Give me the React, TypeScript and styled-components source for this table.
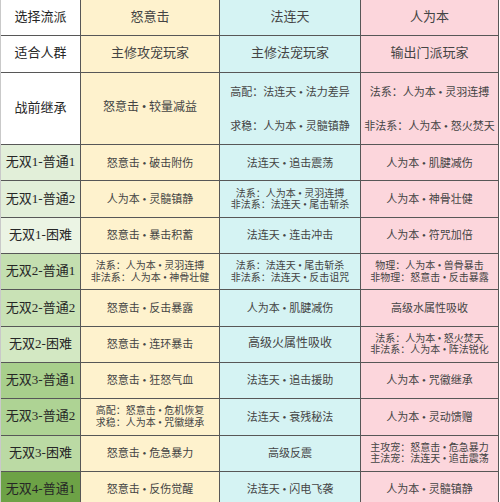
import React from 'react'
import styled, { createGlobalStyle } from 'styled-components'

const GlobalStyle = createGlobalStyle`
  html, body {
    margin: 0;
    padding: 0;
    background: #fff;
    overflow: hidden;
  }
  body {
    font-family: 'Liberation Serif', 'Noto Sans CJK SC', serif;
  }
`

const COLUMN_BG = ['#fef2cd', '#d5f3f3', '#fcd6dc']

const Sheet = styled.div`
  display: grid;
  grid-template-columns: 80px 139px 141px 138px;
  grid-template-rows: 36.3px 36.3px 72.6px;
  grid-auto-rows: 36.3px;
  width: 499px;
  border-left: 1px solid #c9c9c9;
`

const Cell = styled.div<{ $bg: string; $size?: number; $spread?: boolean }>`
  box-sizing: border-box;
  display: flex;
  flex-direction: column;
  align-items: center;
  justify-content: ${p => (p.$spread ? 'space-around' : 'center')};
  padding: ${p => (p.$spread ? '2px 0 0' : '0')};
  background: ${p => p.$bg};
  border-right: 1px solid #575757;
  border-bottom: 1px solid #575757;
  font-size: ${p => p.$size ?? 11}px;
  line-height: 1.15;
  color: #444;
  white-space: nowrap;
  overflow: hidden;
`

const Label = styled(Cell)`
  font-size: 13px;
  color: #262626;
`

type CellData = { lines: string[]; size?: number; spread?: boolean }

type RowData = { label: string; green: string; cells: CellData[] }

const one = (text: string, size?: number): CellData => ({ lines: [text], size })
const two = (a: string, b: string, size = 10): CellData => ({ lines: [a, b], size })

const head: RowData[] = [
  { label: '选择流派', green: '#fff', cells: [one('怒意击', 13), one('法连天', 13), one('人为本', 13)] },
  { label: '适合人群', green: '#fff', cells: [one('主修攻宠玩家', 13), one('主修法宠玩家', 13), one('输出门派玩家', 13)] },
  {
    label: '战前继承',
    green: '#fff',
    cells: [
      one('怒意击 • 较量减益', 12),
      { lines: ['高配：法连天 • 法力差异', '求稳：人为本 • 灵髓镇静'], size: 11, spread: true },
      { lines: ['法系：人为本 • 灵羽连搏', '非法系：人为本 • 怒火焚天'], size: 11, spread: true },
    ],
  },
]

const rows: RowData[] = [
  { label: '无双1-普通1', green: '#e2efd9', cells: [one('怒意击 • 破击附伤'), one('法连天 • 追击震荡'), one('人为本 • 肌腱减伤')] },
  {
    label: '无双1-普通2',
    green: '#e2efd9',
    cells: [one('人为本 • 灵髓镇静'), two('法系：人为本 • 灵羽连搏', '非法系：法连天 • 尾击斩杀'), one('人为本 • 神骨壮健')],
  },
  { label: '无双1-困难', green: '#ebf4e4', cells: [one('怒意击 • 暴击积蓄'), one('法连天 • 连击冲击'), one('人为本 • 符咒加倍')] },
  {
    label: '无双2-普通1',
    green: '#c4dfb0',
    cells: [
      two('法系：人为本 • 灵羽连搏', '非法系：人为本 • 神骨壮健'),
      two('法系：法连天 • 尾击斩杀', '非法系：法连天 • 反击诅咒'),
      two('物理：人为本 • 兽骨暴击', '非物理：怒意击 • 反击暴露'),
    ],
  },
  { label: '无双2-普通2', green: '#c9e2b6', cells: [one('怒意击 • 反击暴露'), one('人为本 • 肌腱减伤'), one('高级水属性吸收')] },
  {
    label: '无双2-困难',
    green: '#d3e8c3',
    cells: [one('怒意击 • 连环暴击'), one('高级火属性吸收', 12), two('法系：人为本 • 怒火焚天', '非法系：人为本 • 阵法锐化')],
  },
  { label: '无双3-普通1', green: '#a8cf8c', cells: [one('怒意击 • 狂怒气血'), one('法连天 • 追击援助'), one('人为本 • 咒徽继承')] },
  {
    label: '无双3-普通2',
    green: '#aed394',
    cells: [two('高配：怒意击 • 危机恢复', '求稳：人为本 • 咒徽继承'), one('法连天 • 衰残秘法'), one('人为本 • 灵动馈赠')],
  },
  {
    label: '无双3-困难',
    green: '#bbdaa4',
    cells: [one('怒意击 • 危急暴力'), one('高级反震'), two('主攻宠：怒意击 • 危急暴力', '主法宠：法连天 • 追击震荡')],
  },
  { label: '无双4-普通1', green: '#6da246', cells: [one('怒意击 • 反伤觉醒'), one('法连天 • 闪电飞袭'), one('人为本 • 灵髓镇静')] },
]

const Row = ({ row }: { row: RowData }) => (
  <>
    <Label $bg={row.green}>{row.label}</Label>
    {row.cells.map((c, i) => (
      <Cell key={i} $bg={COLUMN_BG[i]} $size={c.size} $spread={c.spread}>
        {c.lines.map(l => (
          <span key={l}>{l}</span>
        ))}
      </Cell>
    ))}
  </>
)

export default function App() {
  return (
    <>
      <GlobalStyle />
      <Sheet>
        {[...head, ...rows].map(r => (
          <Row key={r.label} row={r} />
        ))}
      </Sheet>
    </>
  )
}
